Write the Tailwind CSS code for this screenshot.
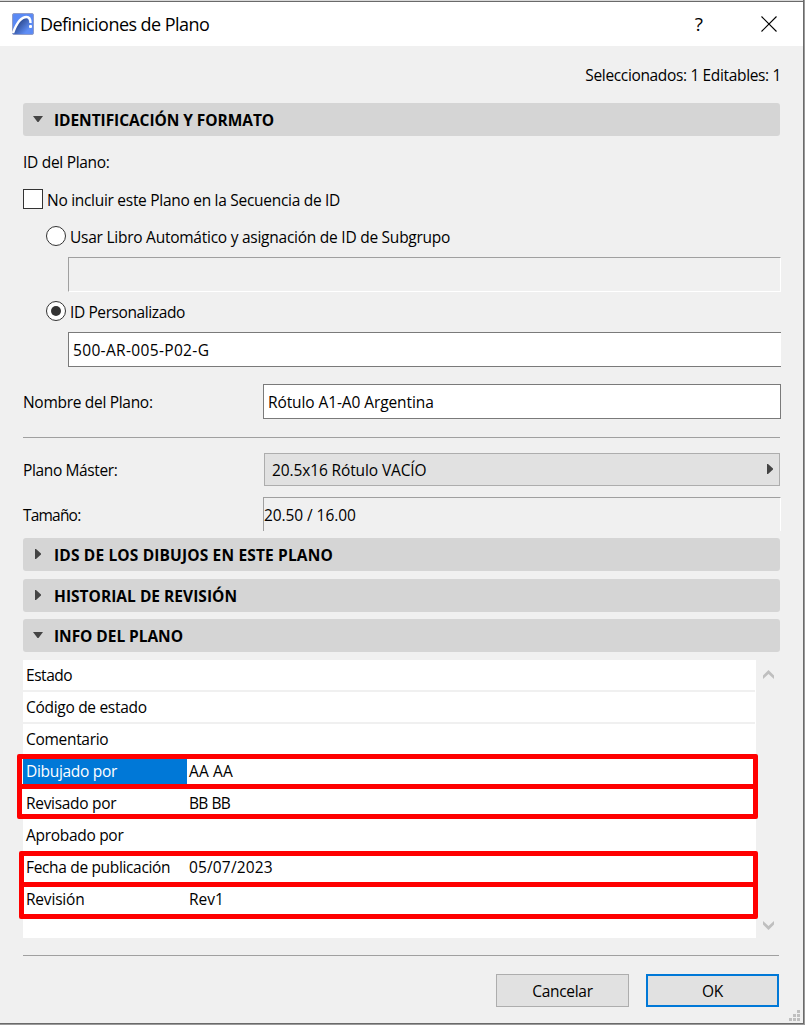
<!DOCTYPE html>
<html lang="es">
<head>
<meta charset="utf-8">
<title>Definiciones de Plano</title>
<script src="https://cdn.jsdelivr.net/npm/@tailwindcss/browser@4"></script>
</head>
<body class="w-[805px] h-[1025px] overflow-hidden bg-[#9a9a9a] font-['Open_Sans','Noto_Sans',sans-serif] text-[15.5px] leading-5 tracking-[-0.3px] text-black whitespace-nowrap">
<div class="relative w-[804px] h-[1024px] bg-[#f0f0f0] border-r border-b border-[#6a6a6a] flex flex-col">
  <div class="h-px shrink-0 bg-[#d9d9d9]"></div>
  <header class="h-[45px] shrink-0 bg-white border-t border-[#6a6a6a] flex items-center pl-3">
    <svg class="w-[22px] h-[22px] shrink-0 -mt-px" viewBox="0 0 22 22">
      <defs><linearGradient id="g" x1="0.1" y1="0.2" x2="0.9" y2="0.9"><stop offset="0.3" stop-color="#34549f"/><stop offset="0.9" stop-color="#5f8ef5"/></linearGradient></defs>
      <rect x="0.5" y="0.5" width="21" height="21" rx="1.5" fill="#5b8af5" stroke="#8f9cc8"/>
      <path d="M1 20C5 10 9 5 15 5L18 9L18 21L1 21Z" fill="url(#g)"/>
      <path d="M1 20C5 9 9 4 14.500 4C17.500 4 18.500 6 18.500 10" fill="none" stroke="#fff" stroke-width="2.400"/>
      <rect x="17" y="12" width="3" height="3" rx="1" fill="#fff"/>
    </svg>
    <h1 class="ml-1.5 text-[18px] leading-6 tracking-[-0.55px]">Definiciones de Plano</h1>
    <span class="ml-auto mr-[58px] text-[19px] leading-6 tracking-normal">?</span>
    <svg class="w-4 h-4 -mt-px mr-[26px]" viewBox="0 0 16 16"><path d="M0.500 0.500L15.500 15.500M15.500 0.500L0.500 15.500" stroke="#000" stroke-width="1.100"/></svg>
  </header>
  <main class="pl-[23px] flex flex-col">
    <div class="mt-[19px] h-5 w-[758px] text-right tracking-[-0.35px]">Seleccionados: 1 Editables: 1</div>
    <div class="mt-[18px] h-[33px] w-[757px] rounded-[3px] bg-[#d5d5d5] flex items-center pl-[10px]">
      <svg class="-mt-px w-[10px] h-[6px]" viewBox="0 0 10 6"><path d="M0 0H10L5.500 6H4.500Z" fill="#444"/></svg>
      <h2 class="ml-[11px] pt-px font-bold tracking-[-0.06px]">IDENTIFICACIÓN Y FORMATO</h2>
    </div>
    <div class="mt-4 h-5">ID del Plano:</div>
    <label class="mt-[17px] h-5 flex"><span class="w-5 h-5 bg-white border border-[#333]"></span><span class="ml-1 mt-px tracking-[-0.29px]">No incluir este Plano en la Secuencia de ID</span></label>
    <label class="mt-[17px] ml-[23px] h-5 flex"><span class="w-5 h-5 rounded-full bg-white border border-[#333]"></span><span class="ml-1 mt-px tracking-[-0.25px]">Usar Libro Automático y asignación de ID de Subgrupo</span></label>
    <div class="mt-[11px] ml-[45px] w-[713px] h-[35px] border border-t-[#a0a0a0] border-l-[#a0a0a0] border-r-white border-b-white"></div>
    <label class="mt-[9px] ml-[23px] h-5 flex"><span class="w-5 h-5 rounded-full bg-white border border-[#333] flex items-center justify-center"><span class="w-[10px] h-[10px] rounded-full bg-[#333]"></span></span><span class="ml-1 mt-px tracking-[-0.4px]">ID Personalizado</span></label>
    <div class="mt-[11px] ml-[45px] w-[713px] h-[35px] bg-white border border-r-0 border-[#7a7a7a] flex items-center pl-1 tracking-[0.34px]">500-AR-005-P02-G</div>
    <div class="mt-[17px] h-[35px] w-[758px] flex items-center"><span class="w-[240px]">Nombre del Plano:</span><span class="h-full flex-1 bg-white border border-[#7a7a7a] pl-1 pt-[7px] tracking-[-0.1px]">Rótulo A1-A0 Argentina</span></div>
    <div class="mt-[18px] h-px w-[757px] bg-[#a0a0a0]"></div>
    <div class="mt-[15px] h-[33px] w-[757px] flex items-center"><span class="w-[241px] tracking-[-0.37px]">Plano Máster:</span><span class="h-full flex-1 bg-[#e1e1e1] border border-[#adadad] pl-[7px] pr-[6px] flex items-center"><span class="flex-1 tracking-[-0.12px]">20.5x16 Rótulo VACÍO</span><svg class="-mt-px w-[6px] h-[10px]" viewBox="0 0 6 10"><path d="M0 0H1L6 4.500V5.500L1 10H0Z" fill="#444"/></svg></span></div>
    <div class="mt-[11px] h-[34px] w-[758px] flex items-center"><span class="w-[240px] pt-0.5 tracking-[-0.8px]">Tamaño:</span><span class="h-full flex-1 border border-b-0 border-t-[#a0a0a0] border-l-[#a0a0a0] border-r-white pt-[7px] tracking-[-0.08px]">20.50 / 16.00</span></div>
    <div class="mt-[7px] h-[33px] w-[757px] rounded-[3px] bg-[#d5d5d5] flex items-center pl-3">
      <svg class="-mt-px w-[6px] h-[10px]" viewBox="0 0 6 10"><path d="M0 0H1L6 4.500V5.500L1 10H0Z" fill="#444"/></svg>
      <h2 class="ml-[13px] pt-px font-bold tracking-[0.15px]">IDS DE LOS DIBUJOS EN ESTE PLANO</h2>
    </div>
    <div class="mt-2 h-[33px] w-[757px] rounded-[3px] bg-[#d5d5d5] flex items-center pl-3">
      <svg class="-mt-px w-[6px] h-[10px]" viewBox="0 0 6 10"><path d="M0 0H1L6 4.500V5.500L1 10H0Z" fill="#444"/></svg>
      <h2 class="ml-[13px] pt-px font-bold tracking-[0.02px]">HISTORIAL DE REVISIÓN</h2>
    </div>
    <div class="mt-[7px] h-[33px] w-[757px] rounded-[3px] bg-[#d5d5d5] flex items-center pl-[10px]">
      <svg class="-mt-px w-[10px] h-[6px]" viewBox="0 0 10 6"><path d="M0 0H10L5.500 6H4.500Z" fill="#444"/></svg>
      <h2 class="ml-[11px] pt-px font-bold tracking-[-0.05px]">INFO DEL PLANO</h2>
    </div>
    <div class="mt-2 h-[278px] flex">
      <div class="relative w-[733px] bg-white">
        <div class="h-8 w-[732px] border-b-2 border-[#f0f0f0] pl-[3px] pt-[5px] tracking-[-0.45px]">Estado</div>
        <div class="h-8 w-[732px] border-b-2 border-[#f0f0f0] pl-[3px] pt-[5px]">Código de estado</div>
        <div class="h-8 pl-[3px] pt-[5px]">Comentario</div>
        <div class="h-8 flex"><span class="w-[164px] bg-[#0078d7] text-white pl-[3px] pt-[5px]">Dibujado por</span><span class="pl-0.5 pt-[5px] tracking-[0.15px]">AA AA</span></div>
        <div class="h-8 flex pt-[5px]"><span class="w-[164px] pl-[3px]">Revisado por</span><span class="pl-0.5 tracking-[-0.75px] [word-spacing:0.6px]">BB BB</span></div>
        <div class="h-8 pl-[3px] pt-[5px]">Aprobado por</div>
        <div class="h-8 flex pt-[5px]"><span class="w-[164px] pl-[3px] tracking-[-0.34px]">Fecha de publicación</span><span class="pl-0.5 tracking-[0.15px]">05/07/2023</span></div>
        <div class="h-8 flex pt-[5px]"><span class="w-[164px] pl-[3px] tracking-[-0.2px]">Revisión</span><span class="pl-0.5 tracking-normal">Rev1</span></div>
        <!-- highlight frames over the rows -->
        <div class="absolute left-[-6px] top-[94px] w-[741px] h-[35px] border-5 border-[#f00] rounded-[2px]"></div>
        <div class="absolute left-[-6px] top-[124px] w-[741px] h-[35px] border-5 border-[#f00] rounded-[2px]"></div>
        <div class="absolute left-[-1px] top-[99px] w-px h-[25px] bg-white"></div>
        <div class="absolute left-[-1px] top-[129px] w-px h-[25px] bg-white"></div>
        <div class="absolute left-[-4px] top-[191px] w-[739px] h-[36px] border-5 border-[#f00] rounded-[2px]"></div>
        <div class="absolute left-[-4px] top-[222px] w-[739px] h-[37px] border-5 border-[#f00] rounded-[2px]"></div>
      </div>
      <div class="ml-[7px] pt-[9px] pb-2 flex flex-col justify-between">
        <svg class="mt-px w-[11px] h-[9px]" viewBox="0 0 11 9"><path d="M0 5.500L5.500 0L11 5.500V9L5.500 4L0 9Z" fill="#bfbfbf"/></svg>
        <svg class="w-[11px] h-[9px]" viewBox="0 0 11 9"><path d="M0 0L5.500 5L11 0V3.500L5.500 9L0 3.500Z" fill="#bfbfbf"/></svg>
      </div>
    </div>
    <div class="mt-[17px] h-px w-[756px] bg-[#a0a0a0]"></div>
    <div class="mt-[18px] w-[756px] flex justify-end gap-[17px]">
      <button class="w-[133px] h-[33px] bg-[#e1e1e1] border border-[#adadad] pt-px">Cancelar</button>
      <button class="w-[133px] h-[33px] bg-[#e1e1e1] border-2 border-[#0078d7] pt-px">OK</button>
    </div>
  </main>
  <svg class="absolute left-[789px] top-[1010px] w-[11px] h-[11px]" viewBox="0 0 11 11"><path d="M8 0h3v3h-3zM8 4h3v3h-3zM4 4h3v3h-3zM8 8h3v3h-3zM4 8h3v3h-3zM0 8h3v3h-3z" fill="#bfbfbf"/></svg>
</div>
</body>
</html>
